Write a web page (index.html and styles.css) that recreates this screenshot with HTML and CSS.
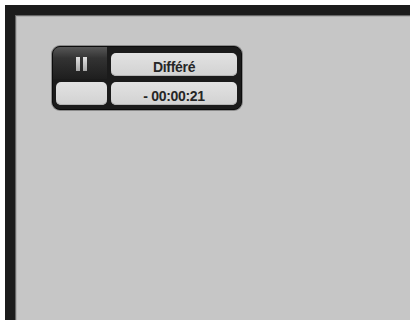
FILE: index.html
```html
<!DOCTYPE html>
<html>
<head>
<meta charset="utf-8">
<link rel="stylesheet" href="styles.css">
</head>
<body>
<div class="screen">
  <div class="osd">
    <div class="state">
      <span class="bar"></span><span class="bar"></span>
    </div>
    <div class="cell label">Différé</div>
    <div class="cell blank"></div>
    <div class="cell label">- 00:00:21</div>
  </div>
</div>
</body>
</html>
```
FILE: styles.css
```css
html, body {
  margin: 0;
  padding: 0;
  background: #ffffff;
  height: 100%;
}
.screen {
  margin: 5px 0 0 5px;
  height: calc(100% - 5px);
  box-sizing: border-box;
  border-top: 10px solid #1c1c1c;
  border-left: 10px solid #1c1c1c;
  background: #c6c6c6;
  box-shadow: inset 1px 1px 0 #666666, inset 2px 2px 0 #b0b0b0;
  padding: 31px 0 0 37px;
}
.osd {
  width: 190px;
  height: 64px;
  box-sizing: border-box;
  background: #1b1b1b;
  border: 1px solid #0c0c0c;
  border-radius: 8px;
  box-shadow: 0 0 0 1px #8a8a8a;
  padding: 6px 4px 3px 3px;
  display: grid;
  grid-template-columns: 51px 126px;
  grid-template-rows: 23px 23px;
  column-gap: 4px;
  row-gap: 6px;
}
.state {
  margin: -6px 0 -3px -3px;
  border-top-left-radius: 7px;
  background: linear-gradient(#575757 0%, #333333 35%, #1e1e1e 100%);
  display: flex;
  justify-content: center;
  align-items: center;
  gap: 3px;
  padding: 2px 0 0 2px;
}
.bar {
  width: 4px;
  height: 14px;
  background: linear-gradient(#e0e0e0, #a8a8a8);
}
.cell {
  background: linear-gradient(#e2e2e2, #d2d2d2);
  border-radius: 5px;
  box-shadow: inset 0 -1px 0 #b4b4b4;
}
.label {
  display: flex;
  align-items: center;
  justify-content: center;
  padding-top: 4px;
  box-sizing: border-box;
  font-family: "Liberation Sans", Arial, sans-serif;
  font-weight: bold;
  font-size: 14px;
  color: #262626;
  letter-spacing: -0.3px;
}
```
